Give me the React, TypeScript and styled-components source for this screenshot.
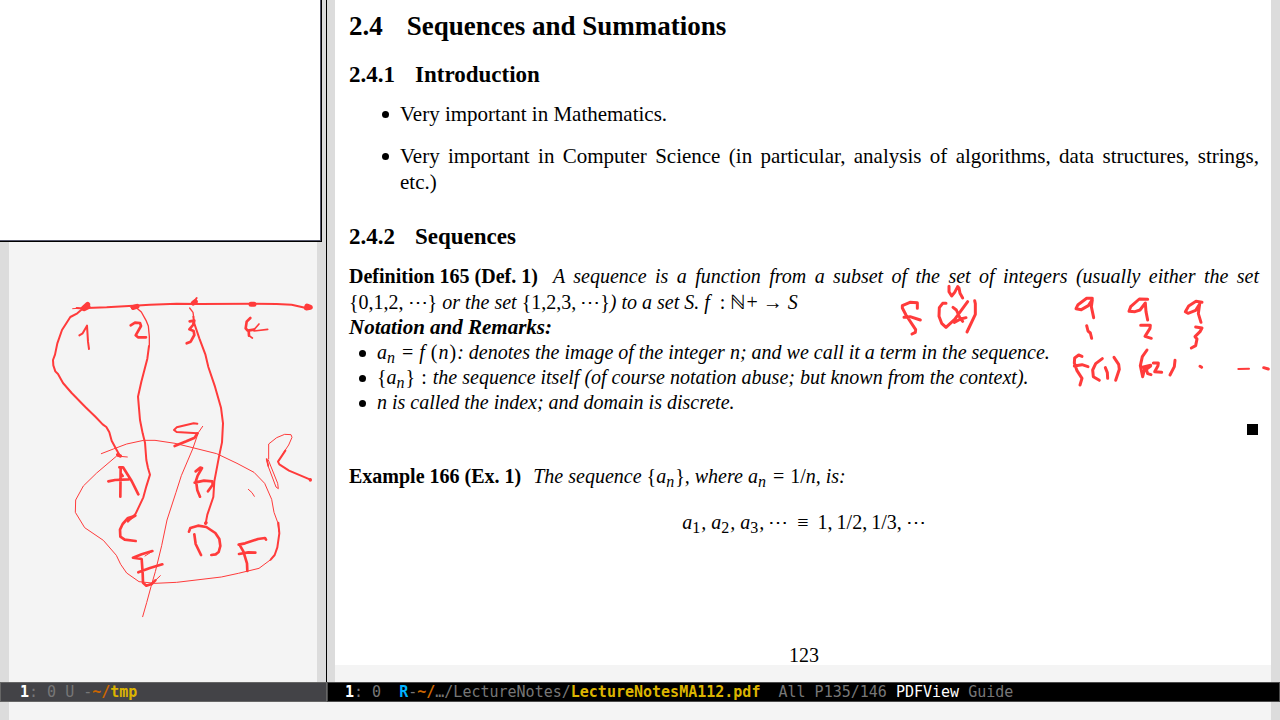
import React from 'react';
import styled, { createGlobalStyle } from 'styled-components';

const GlobalStyle = createGlobalStyle`
  * { box-sizing: border-box; }
  body { margin: 0; background: #f4f4f4; }
`;

const Frame = styled.div`
  display: flex;
  flex-direction: column;
  min-height: 100vh;
  overflow: hidden;
`;

const Windows = styled.main`
  flex: 1;
  display: grid;
  grid-template-columns: minmax(0, 327fr) minmax(0, 953fr);
`;

const Pane = styled.section`
  display: flex;
  flex-direction: column;
`;

const Buffer = styled.div<{ $left: number; $divider?: boolean }>`
  position: relative;
  flex: 1;
  border-left: ${(p) => p.$left}px solid #dcdcdc;
  border-right: 9px solid #dcdcdc;
  ${(p) => p.$divider && 'box-shadow: 1px 0 0 #000; margin-right: 1px;'}
`;

const Camera = styled.div`
  position: absolute;
  top: 0;
  left: -9px;
  width: 322px;
  height: 242px;
  background: #fff;
  border: solid #000;
  border-width: 0 1px 1px 0;
  box-shadow: inset -1px -1px 0 #55566a;
`;

const Ink = styled.svg`
  position: absolute;
  fill: none;
  stroke: #ff3b3b;
  stroke-linecap: round;
  stroke-linejoin: round;
  pointer-events: none;
`;

const BoardInk = styled(Ink)`
  top: 0;
  left: -9px;
  width: 326px;
  height: 682px;
`;

const PageInk = styled(Ink)`
  top: 260px;
  right: 0;
  width: 391px;
  height: 190px;
`;

const ModeLine = styled.footer<{ $active?: boolean }>`
  height: 20px;
  padding-left: ${(p) => (p.$active ? 17 : 19)}px;
  border: 1px solid ${(p) => (p.$active ? '#4a4a4a' : '#666')};
  background: ${(p) => (p.$active ? '#000' : '#434347')};
  color: #777;
  font: 15px/18px 'DejaVu Sans Mono', monospace;
  white-space: pre;
  overflow: hidden;
`;

const Mark = styled.span<{ $color: string; $bold?: boolean }>`
  color: ${(p) => p.$color};
  font-weight: ${(p) => (p.$bold ? 700 : 400)};
`;

const Echo = styled.div`
  height: 18px;
  border: solid #dcdcdc;
  border-width: 0 9px;
`;

const Sheet = styled.article`
  padding: 10px 12px 0 14px;
  background: #fff;
  color: #000;
  font: 21px/26px 'Liberation Serif', serif;
`;

const Chapter = styled.h1`
  display: flex;
  gap: 24px;
  margin: 0 0 20px;
  font-size: 27px;
  line-height: 32px;
`;

const Section = styled.h2`
  display: flex;
  gap: 20px;
  margin: 0 0 13px;
  font-size: 23px;
  line-height: 26px;
`;

const Topics = styled.ul`
  display: flex;
  flex-direction: column;
  gap: 16px;
  margin: 0 0 29px;
  padding: 0 0 0 51px;
  list-style: none;
`;

const Remarks = styled.ul`
  margin: 0;
  padding: 0 0 0 28px;
  list-style: none;
  font-size: 20px;
  font-style: italic;
  line-height: 25px;
`;

const Item = styled.li`
  position: relative;
  &::before {
    content: '';
    position: absolute;
    top: 10px;
    left: -18px;
    width: 7px;
    height: 7px;
    border-radius: 50%;
    background: #000;
  }
`;

const Paragraph = styled.p`
  margin: 0;
  font-size: 20px;
  font-style: italic;
`;

const Line = styled.span<{ $full?: boolean }>`
  display: block;
  white-space: nowrap;
  ${(p) => p.$full && 'text-align: justify; text-align-last: justify; white-space: normal;'}
`;

const Label = styled.b`
  display: inline-block;
  margin-right: 7px;
  font-style: normal;
`;

const Subhead = styled.h3`
  margin: 0;
  font-size: 21px;
  font-style: italic;
  line-height: 25px;
`;

const Up = styled.span`
  font-style: normal;
`;

const Relation = styled(Up)`
  margin: 0 1px;
`;

const Sub = styled.sub`
  margin-right: 1px;
  font-size: 16px;
  line-height: 0;
  vertical-align: -4px;
`;

const Tombstone = styled.div`
  width: 11px;
  height: 11px;
  margin: 9px 1px 28px auto;
  background: #000;
`;

const Formula = styled.p`
  margin: 20px 0 111px;
  font-size: 20px;
  font-style: italic;
  text-align: center;
`;

const Folio = styled.div`
  font-size: 20px;
  line-height: 19px;
  text-align: center;
`;

const An = () => (
  <>
    a<Sub>n</Sub>
  </>
);

export default function App() {
  return (
    <>
      <GlobalStyle />
      <Frame>
        <Windows>
          <Pane>
            <Buffer $left={9} $divider>
              <Camera />
              <BoardInk viewBox="0 0 978 2046" aria-label="Mapping from numbers to letters">
                <g transform="translate(0 660)" strokeWidth="8">
                  <path strokeWidth="6" d="M230 264L240 265L320 262L400 257L450 254L530 251L600 252L760 251L830 252L875 254L915 263" />
                  <path strokeWidth="3" d="M218 266L235 265" />
                  <path strokeWidth="15" d="M250 265L263 253M252 266L264 260M400 262L411 259M580 249L586 245M753 253L762 253M919 264L931 262L921 258Z" />
                  <path strokeWidth="6" d="M583 243L590 234" />
                  <path strokeWidth="3" d="M392 262Q395 272 402 268" />
                  <path strokeWidth="6" d="M246 268L232 280L211 291L186 330L172 370L165 404L159 420L160 436L166 454L174 462L189 489L215 519L256 561L287 591L308 613L319 621L328 637L335 662L350 690L360 708" />
                  <path strokeWidth="6" d="M238 346L248 340L261 317L264 365L267 387" />
                  <path d="M392 316L405 308L420 309L423 318L407 346L414 352L438 352M569 304L583 302L579 315L568 328L581 333L583 345L572 365L560 370M751 294L740 305L737 325L743 332L762 329M746 332L747 347" />
                  <path strokeWidth="5" d="M747 347L757 354M762 329L777 312M762 333L803 328" />
                  <path strokeWidth="4" d="M410 264L424 276L438 301L445 318L448 350L448 376" />
                  <path strokeWidth="6" d="M447 378L442 416L424 485L414 530L420 600L428 640L435 668L439 720L444 744L450 764L439 799L430 832L407 881L384 905" />
                  <path strokeWidth="4" d="M569 264L579 277L581 291" />
                  <path strokeWidth="6" d="M580 290L583 311L598 355L616 403L625 441L645 500L663 563L669 610L666 667L657 710L643 784L640 831L622 884L617 910" />
                </g>
                <g transform="translate(0 1260)" strokeWidth="8">
                  <path strokeWidth="3" d="M304 101L340 87L380 72L431 61L465 61L525 70L582 84L650 101L711 130L762 157L794 190L815 238L822 277L833 307L837 335" />
                  <path strokeWidth="6" d="M835 308L838 340L832 382L824 405L812 419" />
                  <path strokeWidth="3" d="M812 419L777 445L715 460L664 471L530 487L465 490L417 485L380 459L362 433L349 406L310 361L254 323L226 277L227 240L250 198L290 159L350 108L382 111" />
                  <path strokeWidth="3" d="M608 19L595 38L578 87L544 167L528 217L501 300L485 377L466 455L453 500L440 548L428 590M481 467L455 492M745 208L756 218L763 229" />
                  <path strokeWidth="6" d="M592 11L581 10L530 22L522 30L530 36L592 40" />
                  <path d="M592 40L584 53L559 64L524 78M325 184L345 180L386 178M362 143L361 230M358 142L369 142L395 183L415 223M362 160L368 168M406 287L384 300M404 288L384 294L368 312L360 329L361 350L374 359L407 363M587 154L601 143L606 144L593 167L588 182L592 211L600 230M584 188L612 182L637 184L638 194L624 214M567 335L571 324L594 317L619 321L646 339L658 357L661 378L656 396L647 403L634 405M583 343L587 372L603 405M457 393L425 403L399 413L425 417L428 460L429 488L439 497L455 492L466 481M415 457L450 444L487 433M716 374L735 370L774 357L795 354L798 359M718 373L730 394L741 430L742 453M717 402L745 397L766 398" />
                  <path strokeWidth="3" d="M435 408L457 394M806 117L806 72L830 53L854 43L873 44L876 52L866 75L850 99M800 118L805 140L828 201L835 206L833 190L805 120" />
                  <path strokeWidth="6" d="M856 92L834 125L838 133L867 152L931 179" />
                  <path strokeWidth="5" d="M800 117L805 138" />
                  <path strokeWidth="10" d="M931 179L931 180M353 104L361 108M618 308L617 310" />
                </g>
              </BoardInk>
            </Buffer>
            <ModeLine>
              <Mark $color="#fff" $bold>1</Mark>: 0 U -<Mark $color="#cc6600" $bold>~/</Mark>
              <Mark $color="#dcb400" $bold>tmp</Mark>
            </ModeLine>
          </Pane>
          <Pane>
            <Buffer $left={8}>
              <Sheet>
                <Chapter><span>2.4</span><span>Sequences and Summations</span></Chapter>
                <Section><span>2.4.1</span><span>Introduction</span></Section>
                <Topics>
                  <Item>Very important in Mathematics.</Item>
                  <Item>
                    <Line $full>Very important in Computer Science (in particular, analysis of algorithms, data structures, strings,</Line>
                    <Line>etc.)</Line>
                  </Item>
                </Topics>
                <Section><span>2.4.2</span><span>Sequences</span></Section>
                <Paragraph>
                  <Line $full>
                    <Label>Definition 165 (Def. 1)</Label> A sequence is a function from a subset of the set of integers (usually either the set
                  </Line>
                  <Line>
                    <Up>{'{0,1,2,\u2009⋯}'}</Up> or the set <Up>{'{1,2,3,\u2009⋯}'}</Up>) to a set S. f <Up>&nbsp;: ℕ+ →</Up> S
                  </Line>
                </Paragraph>
                <Subhead>Notation and Remarks:</Subhead>
                <Remarks>
                  <Item><An /> <Relation>=</Relation> f <Relation>(</Relation>n<Relation>)</Relation>: denotes the image of the integer n; and we call it a term in the sequence.</Item>
                  <Item><Up>{'{'}</Up><An /><Up>{'}'}</Up> <Relation>:</Relation> the sequence itself (of course notation abuse; but known from the context).</Item>
                  <Item>n is called the index; and domain is discrete.</Item>
                </Remarks>
                <Tombstone />
                <Paragraph>
                  <Label>Example 166 (Ex. 1)</Label> The sequence <Up>{'{'}</Up><An /><Up>{'}'}</Up>, where <An /> <Relation>=</Relation> <Up>1/</Up>n, is:
                </Paragraph>
                <Formula>
                  a<Sub><Up>1</Up></Sub>, a<Sub><Up>2</Up></Sub>, a<Sub><Up>3</Up></Sub>,<Up>{'\u2009⋯ \u2009≡\u2009 1,\u20091/2,\u20091/3,\u2009⋯'}</Up>
                </Formula>
                <Folio>123</Folio>
              </Sheet>
              <PageInk viewBox="0 0 1173 570" strokeWidth="9" aria-label="Handwritten notes">
                <path d="M207 79L207 95L215 108L224 97L233 80L237 84L240 100L248 114M112 145L112 128L90 127L67 137L67 144L78 165L107 209L106 217L96 222M72 172L90 170L121 180M198 130L188 130L178 143L177 169L185 190L198 202L224 178L263 125M219 142L229 150L240 174L248 184M258 173L242 177L223 187M284 122L286 131L286 163L261 216" />
                <path d="M637 115L620 115L594 134L588 146L604 149L625 137L637 119L634 140L641 173M803 118L778 117L752 140L747 154L765 155L780 150L796 129L798 155L803 180M966 127L948 124L926 138L916 155L924 160L947 151L959 132L955 161L963 187M620 197L624 213L631 219L635 235M782 196L811 196L810 205L795 229L814 235M947 201L966 204L960 215L945 230L951 237L947 257L934 264" />
                <path d="M606 289L596 285L584 294L583 309L591 332L606 355L600 375M583 318L606 314L624 320M667 296L647 311L638 330L640 350L658 361M676 323L682 338L683 355M702 292L716 313L718 328L707 361M801 270L787 290L781 317L788 350L794 326M787 322L812 316M812 318L799 328L803 341L813 344M820 309L835 309L834 317L824 335L845 337M885 301L883 320L870 345M960 319L965 322M1151 323L1165 327" />
                <path strokeWidth="6" d="M1075 327L1107 326" />
              </PageInk>
            </Buffer>
            <ModeLine $active>
              <Mark $color="#fff" $bold>1</Mark>: 0  <Mark $color="#00b4ff" $bold>R</Mark>-<Mark $color="#cc6600" $bold>~/</Mark>…/LectureNotes/<Mark $color="#dcb400" $bold>LectureNotesMA112.pdf</Mark>{'  '}All P135/146 <Mark $color="#fff">PDFView</Mark> Guide
            </ModeLine>
          </Pane>
        </Windows>
        <Echo />
      </Frame>
    </>
  );
}
